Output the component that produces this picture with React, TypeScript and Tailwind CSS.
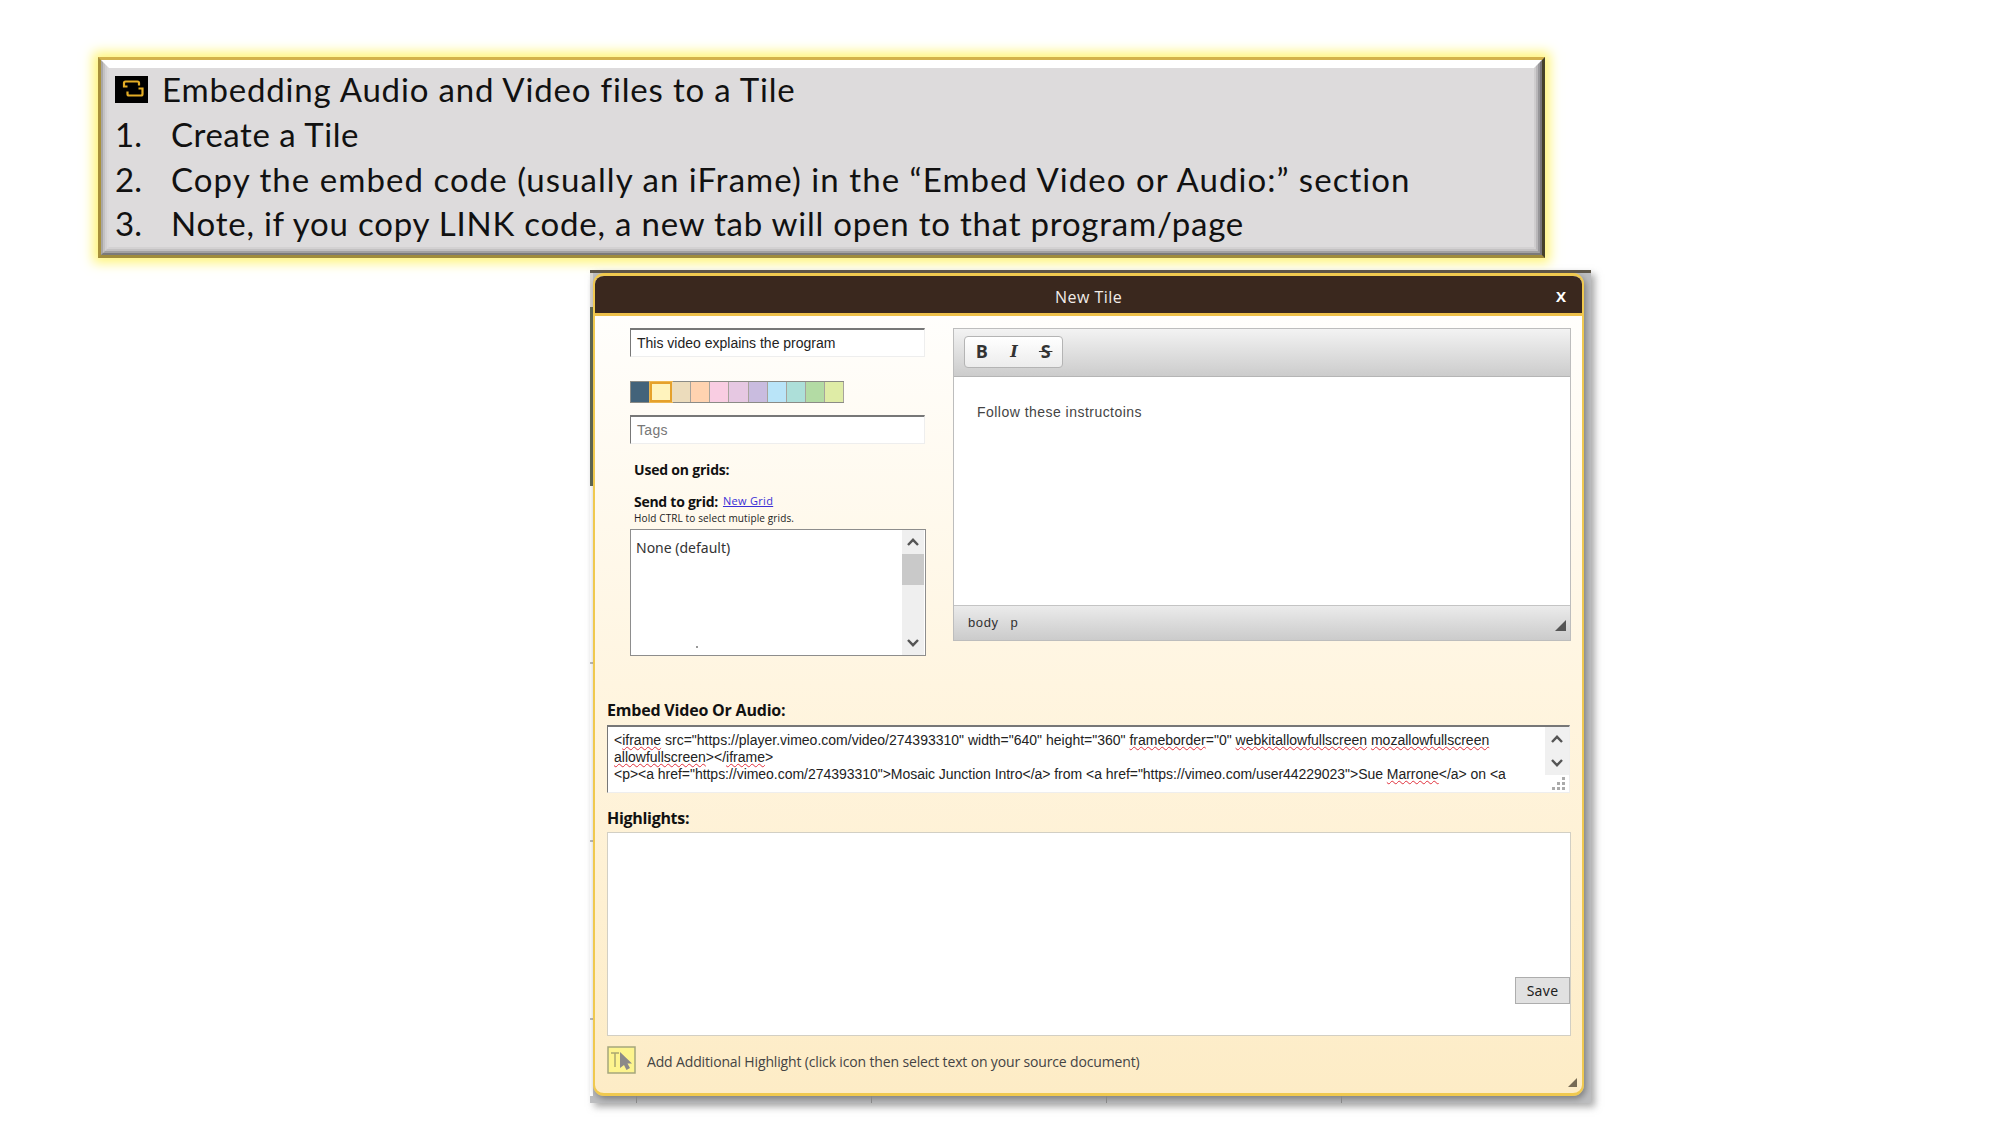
import React from "react";

function Line({ className, children }: { className: string; children: React.ReactNode }) {
  return (
    <div className={"flex items-center whitespace-nowrap " + className}>
      <span>{children}</span>
    </div>
  );
}

const Bad = ({ children }: { children: React.ReactNode }) => (
  <span className="underline decoration-[#e0303c] decoration-wavy decoration-[1.3px] underline-offset-1 [text-decoration-skip-ink:none]">{children}</span>
);

const Up = () => (
  <svg className="h-2 w-3" viewBox="0 0 12 8" fill="none" stroke="#555" strokeWidth="2.4"><path d="M1 7 L6 1.8 L11 7" /></svg>
);
const Down = () => (
  <svg className="h-2 w-3" viewBox="0 0 12 8" fill="none" stroke="#555" strokeWidth="2.4"><path d="M1 1 L6 6.2 L11 1" /></svg>
);

const swatches = [
  "bg-[#43637a]", "bg-[#fff3bd]", "bg-[#ecdcbc]", "bg-[#ffd3b0]", "bg-[#f9cde2]", "bg-[#e6c8e2]",
  "bg-[#c9bcdf]", "bg-[#b9e4f8]", "bg-[#addfd9]", "bg-[#b3dba4]", "bg-[#dfeca6]",
];

function Notes() {
  return (
    <div className="ml-[98px] h-[201px] w-[1447px] border-[3px] border-t-[#d3b24c] border-r-[#45412a] border-b-[#a08c3c] border-l-[#a8913c] shadow-[0_0_11px_5px_#fff57a]">
      <div className="h-full border-2 border-t-white border-r-[#77757a] border-b-[#7b7a7a] border-l-[#a9a7a4]">
        <div className="h-full border-2 border-t-white border-r-[#98979a] border-b-[#a3a2a2] border-l-[#c3c1c2]">
          <div className="h-full border-2 border-t-white border-r-[#b9b7b9] border-b-[#c3c1c2] border-l-[#d2d0d1]">
            <div className="h-full border-2 border-t-white border-r-[#cfcdce] border-b-[#d3d1d2] border-l-[#dad8d9] bg-[#dddbdc] pl-1.5 font-['Lato'] text-[33px] text-[#111]">
              <div className="-mt-px flex h-[45px] items-center">
                <svg className="h-[27px] w-[33px]" viewBox="0 0 33 27" fill="none" stroke="#e3ac26" strokeWidth="2.2">
                  <rect width="33" height="27" fill="#000" stroke="none" />
                  <path d="M12.500 10.500H9V7Q9 5.500 10.500 5.500H22.500Q24 5.500 24 7V9.500" />
                  <path d="M12.500 15.500V18Q12.500 19.500 14 19.500H26Q27.500 19.500 27.500 18V12.500H23.500" />
                </svg>
                <Line className="ml-[14px] tracking-[0.82px]">Embedding Audio and Video files to a Tile</Line>
              </div>
              <div className="flex h-[45px] items-center"><Line className="w-[56px]">1.</Line><Line className="tracking-[0.55px]">Create a Tile</Line></div>
              <div className="flex h-[45px] items-center"><Line className="w-[56px]">2.</Line><Line className="tracking-[1.05px]">Copy the embed code (usually an iFrame) in the “Embed Video or Audio:” section</Line></div>
              <div className="-mt-px flex h-[45px] items-center"><Line className="w-[56px]">3.</Line><Line className="tracking-[0.78px]">Note, if you copy LINK code, a new tab will open to that program/page</Line></div>
            </div>
          </div>
        </div>
      </div>
    </div>
  );
}

function LeftForm() {
  return (
    <div className="w-[296px]">
      <Line className="h-[29px] w-[295px] border border-t-2 border-t-[#777] border-r-[#eee] border-b-[#eee] border-l-[#777] bg-white pl-1.5 font-['Liberation_Sans'] text-[14px] text-[#222]">This video explains the program</Line>
      <div className="mt-[24px] flex h-[22px] w-[214px] border border-r-0 border-[#8b8b86]">
        {swatches.map((c, i) => (
          <div key={c} className={"flex-1 " + c + (i === 1 ? " border-2 border-[#e5a12c] outline outline-[#eeb751]" : " border-r border-[#a7a39c]")} />
        ))}
      </div>
      <Line className="mt-3 h-[29px] w-[295px] border border-t-2 border-t-[#777] border-r-[#eee] border-b-[#eee] border-l-[#777] bg-white pl-1.5 font-['Liberation_Sans'] text-[14px] tracking-[0.3px] text-[#777]">Tags</Line>
      <Line className="mt-[15px] ml-1 h-5 font-['Open_Sans'] text-[14px] font-bold tracking-[-0.2px] text-[#111]">Used on grids:</Line>
      <div className="mt-[12px] ml-1 flex h-5 items-center gap-[5px]">
        <Line className="font-['Open_Sans'] text-[14px] font-bold tracking-[-0.27px] text-[#111]">Send to grid:</Line>
        <Line className="font-['Open_Sans'] text-[11px] tracking-[0.3px] text-[#3a2fd6] underline">New Grid</Line>
      </div>
      <Line className="mt-px ml-1 h-3 font-['Open_Sans'] text-[10px] tracking-[0.12px] text-[#222]">Hold CTRL to select mutiple grids.</Line>
      <div className="mt-[5px] flex h-[127px] border border-[#8d8d8d] bg-white">
        <div className="flex-1 pt-[7px] pl-[5px]">
          <Line className="h-5 font-['Noto_Sans'] text-[14px] text-[#333]">None (default)</Line>
          <div className="mt-[89px] ml-[60px] size-0.5 bg-[#999]" />
        </div>
        <div className="mr-px flex w-[22px] flex-col items-center bg-[#efefef]">
          <div className="flex h-6 items-center"><Up /></div>
          <div className="h-[31px] w-full bg-[#c9c9c9]" />
          <div className="mt-auto flex h-6 items-center"><Down /></div>
        </div>
      </div>
    </div>
  );
}

function Editor() {
  return (
    <div className="flex h-[313px] w-[618px] flex-col border border-[#bdbdbd] bg-white">
      <div className="h-[48px] border-b border-[#b5b5b5] bg-linear-to-b from-[#f3f3f3] to-[#cccccc] pt-[7px] pl-[10px]">
        <div className="flex h-[32px] w-[99px] items-center rounded-[4px] border border-[#b4b4b4] bg-linear-to-b from-white to-[#ececec] pb-px font-['Open_Sans'] text-[18px] font-bold text-[#333]">
          <span className="w-[34px] text-center">B</span>
          <span className="w-[31px] text-center font-['DejaVu_Serif'] text-[16px] italic">I</span>
          <span className="w-[33px] text-center"><span className="px-0.5 line-through">{"\u200AS\u200A"}</span></span>
        </div>
      </div>
      <Line className="mt-[25px] ml-[23px] h-5 font-['Liberation_Sans'] text-[14px] tracking-[0.47px] text-[#444]">Follow these instructoins</Line>
      <div className="mt-auto flex h-[35px] items-center border-t border-[#c4c4c4] bg-linear-to-b from-[#ebebeb] to-[#cbcbcb] pr-1 pl-3.5 font-['Liberation_Sans'] text-[13px] text-[#333]">
        <Line className="tracking-[0.6px]">body</Line>
        <Line className="ml-3">p</Line>
        <svg className="mt-1 ml-auto size-[11px]" viewBox="0 0 11 11"><path d="M11 0V11H0Z" fill="#555" /></svg>
      </div>
    </div>
  );
}

function Dialog() {
  return (
    <div className="flex h-[823px] w-[991px] flex-col overflow-hidden rounded-[11px] border-2 border-t-3 border-b-3 border-[#f0c94f] bg-linear-to-b from-white via-[#fff5e0] to-[#fdecc6] shadow-[2px_3px_6px_#55555599]">
      <div className="flex h-[40px] shrink-0 items-center border-b-[3px] border-[#edc04a] bg-[#3a281e] pt-1 pr-4 pl-[460px] text-white">
        <Line className="pt-px font-['Open_Sans'] text-[16px] tracking-[0.45px] text-[#f1ece8]">New Tile</Line>
        <span className="ml-auto font-['Open_Sans'] text-[15px] font-bold">X</span>
      </div>
      <div className="mt-[12px] flex pl-[35px]">
        <LeftForm />
        <div className="ml-[27px]"><Editor /></div>
      </div>
      <div className="mt-[42px] pl-[12px]">
        <Line className="h-6 font-['Open_Sans'] text-[16px] font-bold tracking-[-0.2px] text-[#111]">Embed Video Or Audio:</Line>
        <div className="mt-[3px] flex h-[68px] w-[963px] border border-t-2 border-t-[#777] border-r-[#eee] border-b-[#eee] border-l-[#777] bg-white pl-1.5">
          <div className="flex-1 pt-[5px] font-['Liberation_Sans'] text-[14px] text-[#222]">
            <Line className="h-[17px]">&lt;<Bad>iframe</Bad> src="https://player.vimeo.com/video/274393310" width="640" height="360" <Bad>frameborder</Bad>="0" <Bad>webkitallowfullscreen</Bad> <Bad>mozallowfullscreen</Bad></Line>
            <Line className="h-[17px]"><Bad>allowfullscreen</Bad>&gt;&lt;/<Bad>iframe</Bad>&gt;</Line>
            <Line className="h-[17px] tracking-[-0.03px]">&lt;p&gt;&lt;a href="https://vimeo.com/274393310"&gt;Mosaic Junction Intro&lt;/a&gt; from &lt;a href="https://vimeo.com/user44229023"&gt;Sue <Bad>Marrone</Bad>&lt;/a&gt; on &lt;a</Line>
          </div>
          <div className="w-6">
            <div className="flex h-12 flex-col items-center justify-between bg-[#f0f0f0] py-2"><Up /><Down /></div>
            <svg className="mt-0.5 ml-[7px] size-[13px]" viewBox="0 0 13 13" fill="#aaa"><path d="M10 0h3v3h-3zM5 5h3v3h-3zM10 5h3v3h-3zM0 10h3v3h-3zM5 10h3v3h-3zM10 10h3v3h-3z" /></svg>
          </div>
        </div>
        <Line className="mt-[13px] h-6 font-['Open_Sans'] text-[16px] font-bold tracking-[-0.3px] text-[#111]">Highlights:</Line>
        <div className="mt-0.5 flex h-[204px] w-[964px] items-end justify-end border border-[#d2cfc4] bg-white pb-[31px]">
          <Line className="h-[27px] w-[55px] justify-center border border-[#adadad] bg-[#e1e1e1] font-['Noto_Sans'] text-[14px] tracking-[0.3px] text-[#222]">Save</Line>
        </div>
        <div className="mt-[9px] flex h-[29px] items-center">
          <svg className="h-[28px] w-[29px]" viewBox="0 0 29 28">
            <rect x="1" y="1" width="27" height="26" fill="#fdf48e" stroke="#a5a67c" strokeWidth="1.500" />
            <path d="M4 7h8M8 7v14" stroke="#aaa770" strokeWidth="1.500" fill="none" />
            <path d="M13 6V22L17 19L19.500 24L23 22L20.500 17.500H25Z" fill="#8b8989" />
          </svg>
          <Line className="ml-[11px] pt-1 font-['Open_Sans'] text-[14px] tracking-[-0.15px] text-[#444]">Add Additional Highlight (click icon then select text on your source document)</Line>
        </div>
      </div>
      <svg className="mt-1 mr-[5px] ml-auto size-[9px]" viewBox="0 0 9 9"><path d="M9 0V9H0Z" fill="#776b55" /></svg>
    </div>
  );
}

export default function App() {
  return (
    <div className="h-[1125px] w-[2000px] overflow-hidden bg-white pt-[57px]">
      <Notes />
      <div className="mt-[12px] ml-[590px] h-[833px] w-[1001px] border-t-[3px] border-[#5e5648] bg-[#bdbec0] shadow-[4px_4px_7px_#77777799]">
        <div className="flex">
          <div className="flex w-[3px] flex-col">
            <div className="h-[34px] bg-[#d8d5cf]" />
            <div className="h-[179px] bg-[#5d6650]" />
            <div className="h-[176px] bg-white" /><div className="h-0.5 bg-[#bbb]" />
            <div className="h-[176px] bg-white" /><div className="h-0.5 bg-[#bbb]" />
            <div className="h-[176px] bg-white" /><div className="h-0.5 bg-[#bbb]" />
            <div className="flex-1 bg-white" />
          </div>
          <Dialog />
        </div>
        <div className="ml-[46px] flex h-[7px] gap-[234px]">
          <div className="w-px bg-[#888]" /><div className="w-px bg-[#888]" /><div className="w-px bg-[#888]" /><div className="w-px bg-[#888]" />
        </div>
      </div>
    </div>
  );
}
